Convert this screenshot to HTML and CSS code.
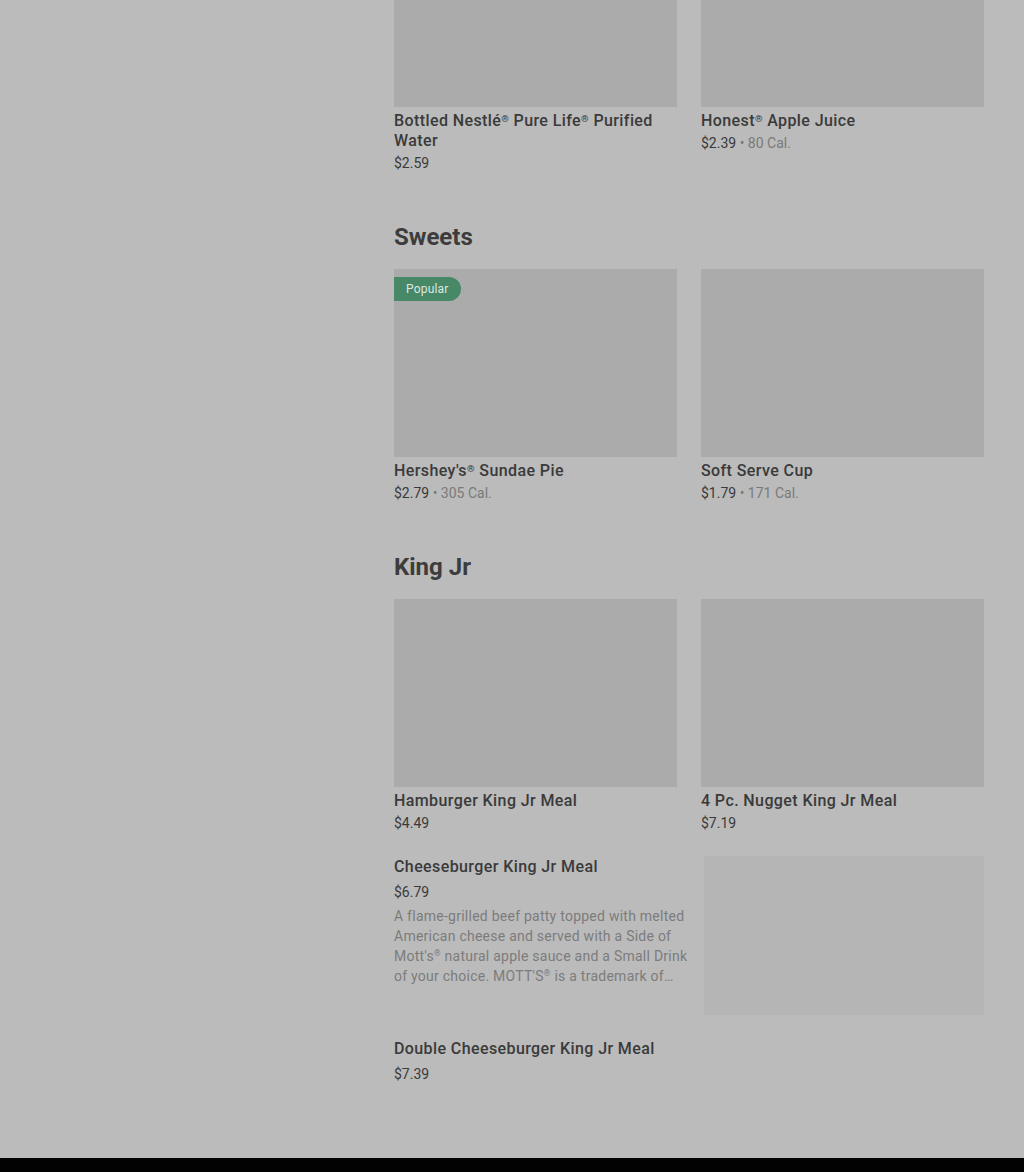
FILE: index.html
```html
<!DOCTYPE html>
<html lang="en">
<head>
<meta charset="utf-8">
<title>Menu</title>
<link rel="stylesheet" href="styles.css">
</head>
<body>
<div class="page">
  <aside class="side"></aside>
  <main class="menu">
    <section class="section first">
      <div class="grid">
        <div class="card">
          <div class="img"></div>
          <div class="title">Bottled Nestlé<span class="reg">®</span> Pure Life<span class="reg">®</span> Purified Water</div>
          <div class="meta"><span class="price">$2.59</span></div>
        </div>
        <div class="card">
          <div class="img"></div>
          <div class="title">Honest<span class="reg">®</span> Apple Juice</div>
          <div class="meta"><span class="price">$2.39</span><span class="cal"> • 80 Cal.</span></div>
        </div>
      </div>
    </section>

    <section class="section">
      <h2 class="heading">Sweets</h2>
      <div class="grid">
        <div class="card">
          <div class="img"><span class="badge">Popular</span></div>
          <div class="title">Hershey's<span class="reg">®</span> Sundae Pie</div>
          <div class="meta"><span class="price">$2.79</span><span class="cal"> • 305 Cal.</span></div>
        </div>
        <div class="card">
          <div class="img"></div>
          <div class="title">Soft Serve Cup</div>
          <div class="meta"><span class="price">$1.79</span><span class="cal"> • 171 Cal.</span></div>
        </div>
      </div>
    </section>

    <section class="section">
      <h2 class="heading">King Jr</h2>
      <div class="grid">
        <div class="card">
          <div class="img"></div>
          <div class="title">Hamburger King Jr Meal</div>
          <div class="meta"><span class="price">$4.49</span></div>
        </div>
        <div class="card">
          <div class="img"></div>
          <div class="title">4 Pc. Nugget King Jr Meal</div>
          <div class="meta"><span class="price">$7.19</span></div>
        </div>
      </div>
      <div class="wide">
        <div class="wide-text">
          <div class="title tall">Cheeseburger King Jr Meal</div>
          <div class="meta tall-meta"><span class="price">$6.79</span></div>
          <p class="desc">A flame-grilled beef patty topped with melted American cheese and served with a Side of Mott's<span class="reg">®</span> natural apple sauce and a Small Drink of your choice. MOTT'S<span class="reg">®</span> is a trademark of…</p>
        </div>
        <div class="wide-img"></div>
      </div>
      <div class="wide">
        <div class="wide-text">
          <div class="title tall">Double Cheeseburger King Jr Meal</div>
          <div class="meta tall-meta"><span class="price">$7.39</span></div>
        </div>
      </div>
    </section>
  </main>
</div>
<div class="footer-bar"></div>
</body>
</html>
```

FILE: styles.css
```css
* { box-sizing: border-box; }
html, body {
  margin: 0;
  padding: 0;
  background: #bbbbbb;
  overflow: hidden;
}
body {
  font-family: Roboto, "Noto Sans", "Liberation Sans", sans-serif;
  color: #3a3a3a;
  height: 1172px;
  display: flex;
  flex-direction: column;
}
.page {
  display: flex;
  flex: 1;
  margin-top: -81px;
}
.side {
  width: 394px;
  flex: none;
}
.menu {
  width: 590px;
  flex: none;
}
.section {
  padding-bottom: 48px;
}
.heading {
  margin: 0 0 16px;
  font-size: 24px;
  line-height: 32px;
  font-weight: 700;
  color: #3c3c3c;
}
.grid {
  display: grid;
  grid-template-columns: 283px 283px;
  column-gap: 24px;
}
.card {
  display: flex;
  flex-direction: column;
}
.img {
  position: relative;
  height: 188px;
  background: #ababab;
}
.badge {
  position: absolute;
  left: 0;
  top: 8px;
  height: 24px;
  line-height: 24px;
  padding: 0 12px;
  background: #478866;
  color: #dfe6e2;
  font-size: 12px;
  letter-spacing: 0.2px;
  border-radius: 0 12px 12px 0;
}
.title {
  margin-top: 4px;
  font-size: 16px;
  line-height: 20px;
  font-weight: 500;
  letter-spacing: 0.4px;
  color: #3a3a3a;
}
.reg {
  display: inline-block;
  font-size: 0.6em;
  line-height: 1;
  vertical-align: top;
  padding-top: 3px;
}
.meta {
  margin-top: 2px;
  font-size: 14px;
  line-height: 20px;
}
.price { color: #3a3a3a; }
.cal { color: #7a7a7a; }
.wide {
  display: flex;
  justify-content: space-between;
  margin-top: 23px;
}
.wide-text {
  width: 296px;
}
.wide-img {
  width: 280px;
  height: 159px;
  background: #b5b5b5;
}
.title.tall {
  margin-top: 0;
  line-height: 22px;
}
.tall-meta {
  margin-top: 4px;
}
.desc {
  margin: 4px 0 0;
  font-size: 14px;
  line-height: 20px;
  letter-spacing: 0.25px;
  color: #7c7c7c;
}
.footer-bar {
  height: 14px;
  background: #020202;
  flex: none;
}
```
